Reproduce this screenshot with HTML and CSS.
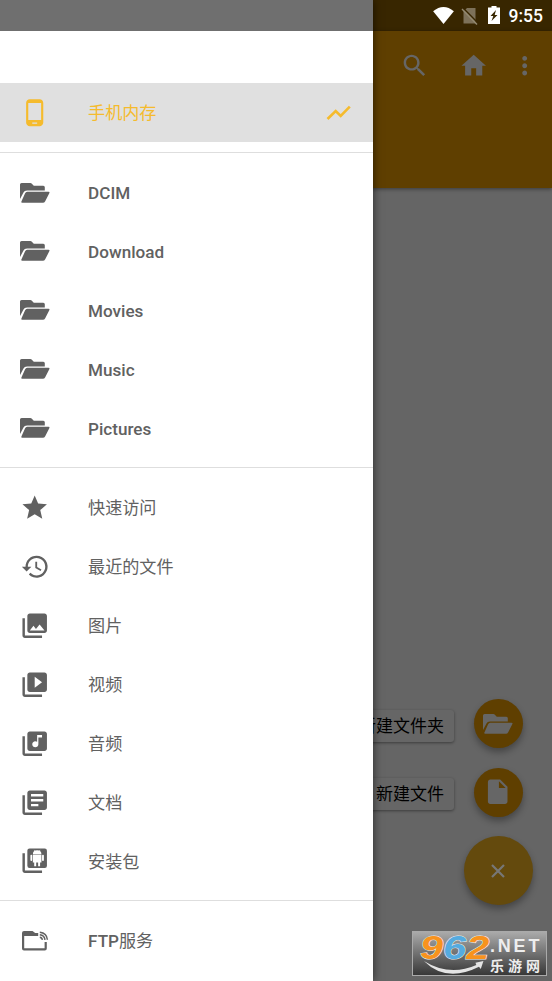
FILE: index.html
```html
<!DOCTYPE html>
<html lang="zh-CN">
<head>
<meta charset="utf-8">
<title>手机内存</title>
<link rel="stylesheet" href="styles.css">
</head>
<body>
<svg class="defs" aria-hidden="true">
  <symbol id="folder" viewBox="0 0 30 20"><path d="M1.600 0h8.800q.7 0 1.200.5L13.800 2.700h9.500q1.500 0 1.500 1.500V7.400H7.200c-2 0-3 .8-3.700 2.200L0 16V1.600Q0 0 1.600 0zM7.200 8.800h21.300q1.500 0 .9 1.300l-4.200 8.200q-.8 1.500-2.300 1.500H2.300q-1.500 0-.9-1.400l3.700-8.100q.7-1.500 2.100-1.500z"/></symbol>
  <symbol id="stack" viewBox="0 0 24 24"><path d="M2 6v14c0 1.100.9 2 2 2h14v-2H4V6H2z"/></symbol>
</svg>
<div class="screen">
  <header class="status">
    <svg class="wifi" viewBox="0 0 22 18"><path d="M0 4.500Q11-4.500 22 4.500L11 18z"/></svg>
    <svg class="sim" viewBox="0 0 17 18"><path d="M6 1h8.500v15.500H2.500V4.500z" opacity=".35"/><path d="M1.800 .8L17 16" stroke="#382600" stroke-width="1.500"/><path d="M1 2L16 17.500" stroke="#938970" stroke-width="1.400"/></svg>
    <svg class="battery" viewBox="0 0 12 18"><path fill-rule="evenodd" d="M3.500 0h5v1.500H12V18H0V1.500h3.500zM8 4L2.500 10h2.800L3.500 15 9.500 9H6.700z"/></svg>
    <time>9:55</time>
  </header>
  <div class="toolbar">
    <svg class="icon" viewBox="0 0 24 24"><path d="M15.500 14h-.79l-.28-.27C15.410 12.590 16 11.110 16 9.500 16 5.910 13.090 3 9.500 3S3 5.910 3 9.500 5.910 16 9.500 16c1.610 0 3.090-.59 4.230-1.570l.27.28v.79l5 4.990L20.490 19l-4.990-5zm-6 0C7.010 14 5 11.990 5 9.500S7.010 5 9.500 5 14 7.010 14 9.500 11.990 14 9.500 14z"/></svg>
    <svg class="icon home" viewBox="0 0 24 24"><path d="M10 20v-6h4v6h5v-8h3L12 3 2 12h3v8z"/></svg>
    <svg class="icon more" viewBox="0 0 24 24"><path d="M12 8c1.100 0 2-.9 2-2s-.9-2-2-2-2 .9-2 2 .9 2 2 2zm0 2c-1.100 0-2 .9-2 2s.9 2 2 2 2-.9 2-2-.9-2-2-2zm0 6c-1.100 0-2 .9-2 2s.9 2 2 2 2-.9 2-2-.9-2-2-2z"/></svg>
  </div>
  <main class="actions">
    <div class="action"><span class="tip">新建文件夹</span><span class="fab"><svg class="fab-folder"><use href="#folder"/></svg></span></div>
    <div class="action"><span class="tip">新建文件</span><span class="fab"><svg class="icon" viewBox="0 0 24 24"><path d="M6 2c-1.100 0-1.990.9-1.990 2L4 20c0 1.100.89 2 1.990 2H18c1.100 0 2-.9 2-2V8l-6-6H6zm7 7V3.500L18.500 9H13z"/></svg></span></div>
    <div class="action"><span class="fab main-fab"><svg class="cross" viewBox="0 0 14 14"><path d="M1 1l12 12M13 1L1 13"/></svg></span></div>
  </main>

  <nav class="drawer">
    <div class="drawer-status"></div>
    <div class="drawer-head"></div>
    <a class="row selected">
      <svg class="icon" viewBox="0 0 24 24"><path d="M16 1H8C6.340 1 5 2.340 5 4v16c0 1.660 1.340 3 3 3h8c1.660 0 3-1.340 3-3V4c0-1.660-1.340-3-3-3zm-2 20h-4v-1h4v1zm3.250-3H6.750V4h10.500v14z"/></svg>
      <span class="cjk">手机内存</span>
      <svg class="trend" viewBox="0 0 26 16"><path d="M1.500 14L9.700 6l5 5L23.800 1.700"/></svg>
    </a>
    <hr>
    <a class="row"><svg class="folder"><use href="#folder"/></svg><span>DCIM</span></a>
    <a class="row"><svg class="folder"><use href="#folder"/></svg><span>Download</span></a>
    <a class="row"><svg class="folder"><use href="#folder"/></svg><span>Movies</span></a>
    <a class="row"><svg class="folder"><use href="#folder"/></svg><span>Music</span></a>
    <a class="row"><svg class="folder"><use href="#folder"/></svg><span>Pictures</span></a>
    <hr>
    <a class="row"><svg class="icon" viewBox="0 0 24 24"><path d="M12 17.270L18.180 21l-1.640-7.030L22 9.240l-7.190-.61L12 2 9.190 8.630 2 9.240l5.460 4.730L5.820 21z"/></svg><span class="cjk">快速访问</span></a>
    <a class="row"><svg class="icon" viewBox="0 0 24 24"><path d="M13.500 3C8.500 3 4.500 7 4.500 12H1.500l3.900 4 3.900-4H6.400c0-3.900 3.200-7.100 7.100-7.100s7.100 3.200 7.100 7.100-3.200 7.100-7.100 7.100c-1.900 0-3.700-.8-5-2.100l-1.300 1.400A9 9 0 1 0 13.500 3zM12.500 8v5l4.300 2.540.72-1.210-3.520-2.080V8z"/></svg><span class="cjk">最近的文件</span></a>
    <a class="row"><svg class="icon" viewBox="0 0 24 24"><use href="#stack"/><path d="M22 16V4c0-1.100-.9-2-2-2H8c-1.100 0-2 .9-2 2v12c0 1.100.9 2 2 2h12c1.100 0 2-.9 2-2zm-11-4l2.030 2.710L16 11l4 5H8l3-4z"/></svg><span class="cjk">图片</span></a>
    <a class="row"><svg class="icon" viewBox="0 0 24 24"><use href="#stack"/><path d="M20 2H8c-1.100 0-2 .9-2 2v12c0 1.100.9 2 2 2h12c1.100 0 2-.9 2-2V4c0-1.100-.9-2-2-2zm-8 12.500v-9l6 4.500-6 4.500z"/></svg><span class="cjk">视频</span></a>
    <a class="row"><svg class="icon" viewBox="0 0 24 24"><use href="#stack"/><path d="M20 2H8c-1.100 0-2 .9-2 2v12c0 1.100.9 2 2 2h12c1.100 0 2-.9 2-2V4c0-1.100-.9-2-2-2zm-2 5h-3v5.500c0 1.380-1.120 2.500-2.500 2.500S10 13.880 10 12.500s1.120-2.500 2.500-2.500c.57 0 1.080.19 1.500.51V5h4v2z"/></svg><span class="cjk">音频</span></a>
    <a class="row"><svg class="icon" viewBox="0 0 24 24"><use href="#stack"/><path d="M20 2H8c-1.100 0-2 .9-2 2v12c0 1.100.9 2 2 2h12c1.100 0 2-.9 2-2V4c0-1.100-.9-2-2-2zm-1 9H9V9h10v2zm-4 4H9v-2h6v2zm4-8H9V5h10v2z"/></svg><span class="cjk">文档</span></a>
    <a class="row"><svg class="icon" viewBox="0 0 24 24"><use href="#stack"/><rect x="6" y="2" width="16" height="16" rx="1.800"/><g class="robot"><path d="M10.500 6.700a3.500 3.200 0 0 1 7 0zM10.500 7.200h7v6.200h-1.100v3.100h-1.600v-3.100h-1.600v3.100h-1.600v-3.100h-1.100z"/><rect x="8.500" y="7.200" width="1.500" height="5" rx=".7"/><rect x="18" y="7.200" width="1.500" height="5" rx=".7"/><path class="antenna" d="M12.300 4.200l-.7-1M15.700 4.200l.7-1"/></g></svg><span class="cjk">安装包</span></a>
    <hr>
    <a class="row"><svg class="ftp" viewBox="0 0 27 20"><path d="M2 0h8.500l2.700 2h3V5H2.200v12.300h20.400V11h2.200v6.500q0 2-2 2H2q-2 0-2-2V2Q0 0 2 0z"/><path class="wave" d="M17.800 6.200q2.300.3 2.600 2.700M17.800 3.700q4.700.5 5.200 5.200M17.800 1.200q7 .7 7.600 7.500"/></svg><span>FTP<span class="cjk">服务</span></span></a>
  </nav>

  <aside class="watermark">
    <svg class="swoosh" viewBox="0 0 70 18"><path d="M0 1Q29 19 59 5.500L58 3l9-2-3 9-2-2.500Q25 26 0 1z"/></svg>
    <div class="digits"><b>9</b><b class="blue">6</b><b>2</b></div>
    <div class="site"><strong>.NET</strong><span>乐游网</span></div>
  </aside>
</div>
</body>
</html>
```
FILE: styles.css
```css
* { box-sizing: border-box; }
body { margin: 0; font-family: Roboto, "Noto Sans CJK SC", sans-serif; }
svg { display: block; flex: none; fill: currentColor; }
.defs { position: absolute; width: 0; height: 0; }
.screen { position: relative; width: 552px; height: 981px; overflow: hidden; display: flex; flex-direction: column; background: #656565; }

.status { height: 31px; flex: none; display: flex; justify-content: flex-end; align-items: center; padding-right: 9px; color: #fff; background: #382600; }
.wifi { width: 21px; height: 17px; margin-right: 7px; }
.sim { width: 17px; height: 18px; margin-right: 10px; }
.battery { width: 12px; height: 18px; margin: -1px 9px 0 0; }
.status time { font-size: 17.500px; font-weight: 500; line-height: 20px; margin-top: 1px; }

.icon { width: 29.400px; height: 29.400px; }
.toolbar { height: 157px; flex: none; display: flex; justify-content: flex-end; align-items: flex-start; padding: 19.500px 12.600px 0 0; color: #666; background: #5f3f00; box-shadow: 0 1px 4px rgba(0,0,0,.45); }
.home { margin-left: 29.200px; }
.more { margin-left: 22px; }

.actions { flex: 1; display: flex; flex-direction: column; align-items: flex-end; justify-content: flex-end; gap: 19.500px; padding: 0 19.500px 76px 0; }
.action { display: flex; align-items: center; justify-content: flex-end; }
.tip { height: 32px; padding: 0 10px; margin: 4px 19.500px 0 0; font-size: 17px; line-height: 33px; color: #000; background: #666; border-radius: 3px; box-shadow: 0 1px 3px rgba(0,0,0,.4); }
.fab { width: 49px; height: 49px; margin-right: 10px; display: flex; align-items: center; justify-content: center; border-radius: 50%; color: #666; background: #5f3f00; box-shadow: 0 4px 7px rgba(0,0,0,.32); }
.fab-folder { width: 30px; height: 20px; }
.main-fab { width: 69px; height: 69px; margin-right: 0; background: #644a0d; }
.cross { width: 14px; height: 14px; fill: none; stroke: #777; stroke-width: 2.200; }

.drawer { position: absolute; left: 0; top: 0; width: 373px; height: 981px; color: #616161; background: #fff; box-shadow: 0 0 9px rgba(0,0,0,.6); }
.drawer-status { height: 30.500px; background: #6f6f6f; }
.drawer-head { height: 52.500px; }
.row { height: 58.900px; display: grid; grid-template-columns: 68.500px 1fr auto; align-items: center; padding-left: 19.600px; font-size: 17.100px; font-weight: 500; line-height: 24px; }
.row > span { margin-top: 1.400px; }
.cjk { font-weight: 400; }
.selected { color: #f5bb2d; background: #e0e0e0; }
.selected > span { margin-top: 2px; }
.folder { width: 30px; height: 20px; }
.trend { width: 26px; height: 16px; margin: 1px 21px 0 0; fill: none; stroke: currentColor; stroke-width: 2.600; }
.ftp { width: 27px; height: 20px; margin-left: 2.500px; }
.wave { fill: none; stroke: currentColor; stroke-width: 1.500; }
.robot { fill: #fff; }
.antenna { stroke: #fff; stroke-width: .5; }
hr { height: 1px; margin: 9.600px 0 10.200px; border: 0; background: #dedede; }
.selected + hr { margin: 10.100px 0; }

.watermark { position: absolute; left: 412px; top: 931px; width: 135px; height: 45px; display: flex; padding-left: 7px; border: 1px solid #aaa; background: linear-gradient(#aaa, #383838); color: #eee; }
.digits { width: 70px; height: 30px; display: flex; font: italic bold 34px/31px "Liberation Sans", sans-serif; color: #f7931e; transform: scaleX(1.220); transform-origin: 0 0; -webkit-text-stroke: 1px #eee; paint-order: stroke fill; }
.digits .blue { color: #55abe0; }
.swoosh { position: absolute; left: 8px; top: 28px; width: 68px; height: 16px; color: #e4e4e4; }
.site { width: 56px; display: flex; flex-direction: column; }
.site strong { font: bold 18px/18px "Liberation Sans", sans-serif; margin: 5px 0 0; letter-spacing: 2.800px; }
.site span { font: 700 14px/16px "Noto Sans CJK SC", sans-serif; margin-top: 2px; letter-spacing: 4px; white-space: nowrap; }
```
